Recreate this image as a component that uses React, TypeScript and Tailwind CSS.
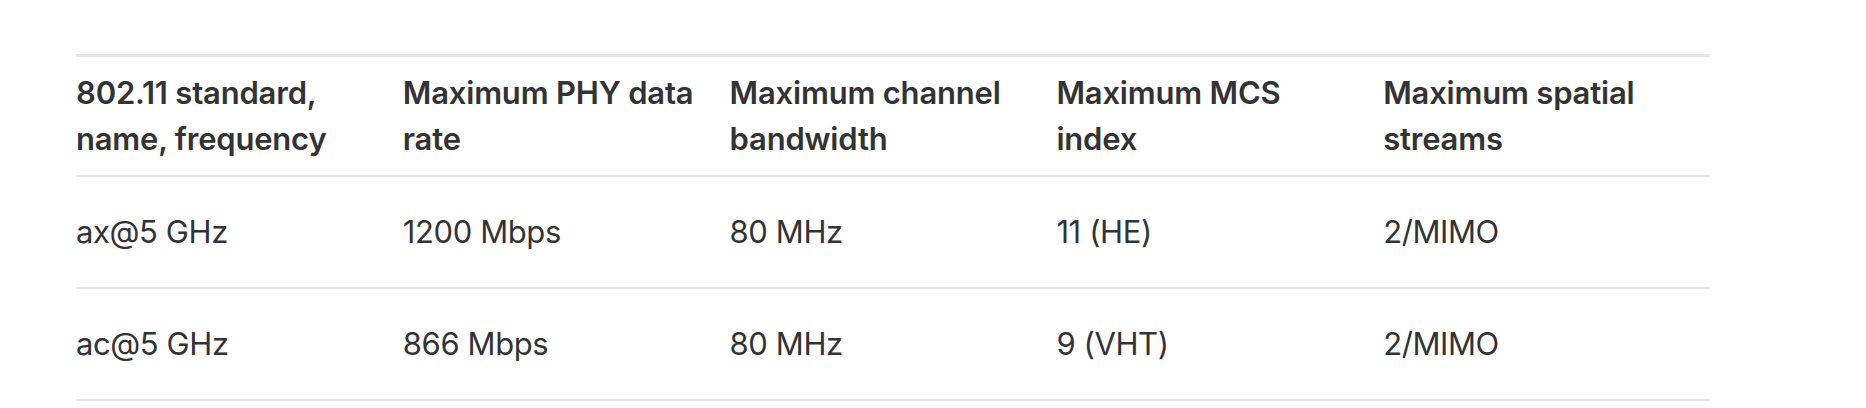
import React from 'react';

type WifiRow = {
  standard: string;
  phyRate: string;
  bandwidth: string;
  mcs: string;
  streams: string;
};

const headers = [
  '802.11 standard, name, frequency',
  'Maximum PHY data rate',
  'Maximum channel bandwidth',
  'Maximum MCS index',
  'Maximum spatial streams',
];

const rows: WifiRow[] = [
  { standard: 'ax@5 GHz', phyRate: '1200 Mbps', bandwidth: '80 MHz', mcs: '11 (HE)', streams: '2/MIMO' },
  { standard: 'ac@5 GHz', phyRate: '866 Mbps', bandwidth: '80 MHz', mcs: '9 (VHT)', streams: '2/MIMO' },
];

export default function App() {
  return (
    <div className="h-[408px] w-[1866px] bg-white pt-[54px] pl-[76px] font-['Inter','Liberation_Sans',sans-serif] text-[#333336]">
      <table className="w-[1634px] table-fixed border-collapse border-t-[3px] border-[#e6e6e6] text-left text-[31px] leading-[46px] tracking-[-0.2px]">
        <thead>
          <tr className="border-b-2 border-[#e6e6e6]">
            {headers.map((h) => (
              <th key={h} className="h-[120px] pr-6 align-middle font-semibold">
                {h}
              </th>
            ))}
          </tr>
        </thead>
        <tbody>
          {rows.map((row) => (
            <tr key={row.standard} className="border-b-2 border-[#e6e6e6]">
              <td className="h-[112px] pr-6 align-middle tracking-[-0.4px]">{row.standard}</td>
              <td className="pr-6 align-middle tracking-[-0.4px]">{row.phyRate}</td>
              <td className="pr-6 align-middle tracking-[-0.4px]">{row.bandwidth}</td>
              <td className="pr-6 align-middle tracking-[-0.4px]">{row.mcs}</td>
              <td className="pr-6 align-middle tracking-[-0.4px]">{row.streams}</td>
            </tr>
          ))}
        </tbody>
      </table>
    </div>
  );
}
